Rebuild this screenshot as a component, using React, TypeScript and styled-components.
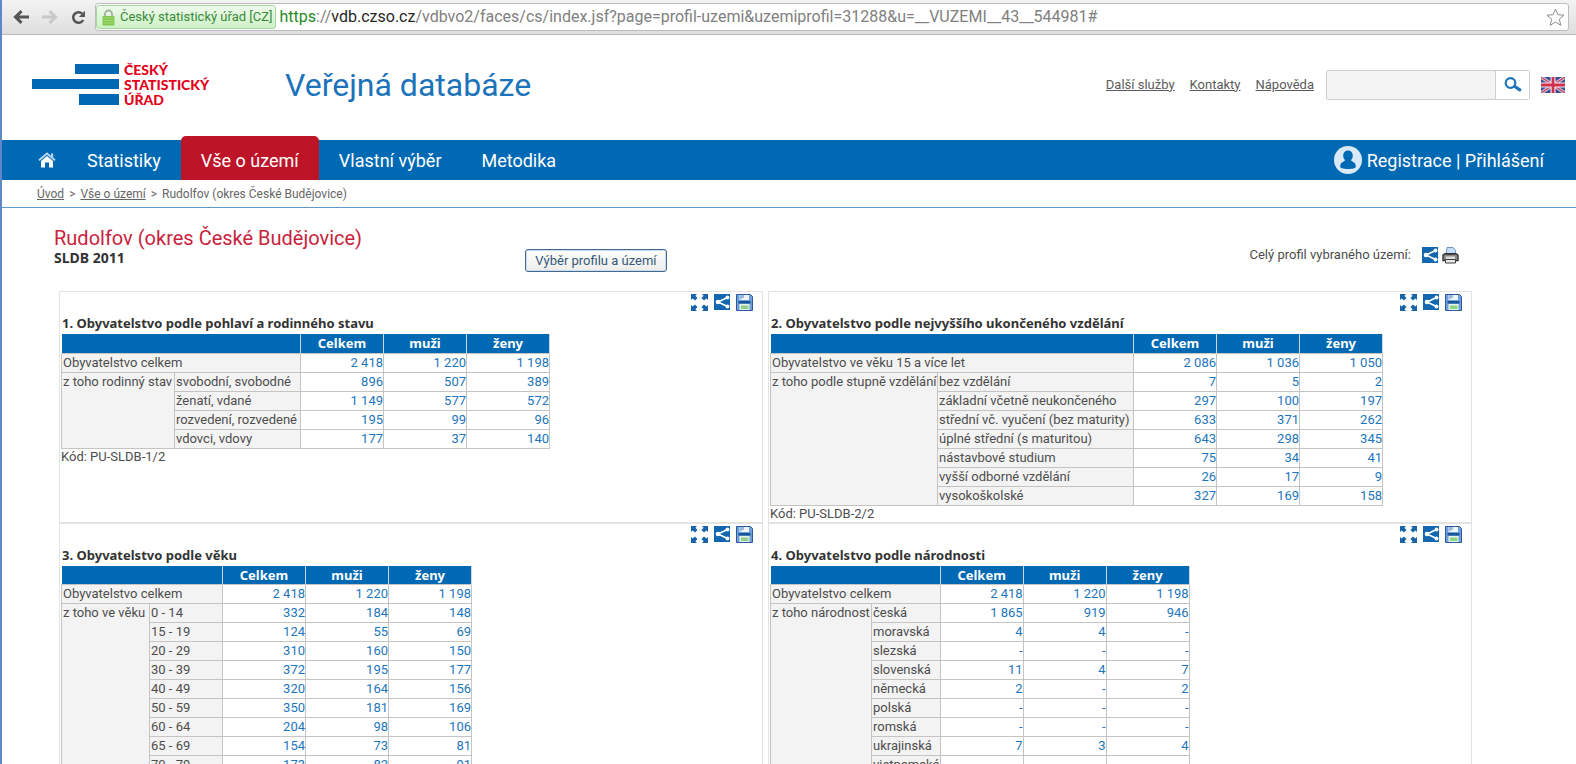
import React from 'react';
import styled, { createGlobalStyle, css } from 'styled-components';

const blue = '#0069b4';
const red = '#be1428';
const bodyFont = 'Roboto, "Noto Sans", sans-serif';
const boldFont = '"Noto Sans", Roboto, sans-serif';

const GlobalStyle = createGlobalStyle`
  *, *::before, *::after { box-sizing: border-box; }
  body { margin: 0; background: #fff; color: #4d4d4d; font: 13px/18px ${bodyFont}; }
  button, input { font: inherit; color: inherit; }
  h1, h2, p { margin: 0; }
  svg { display: block; }
`;

const Window = styled.div`
  display: flex;
  flex-direction: column;
  height: 100vh;
  overflow: hidden;
  border-left: 2px solid #5f86c6;
`;

/* Browser toolbar */
const BrowserBar = styled.div`
  display: flex;
  align-items: center;
  flex: none;
  height: 35px;
  padding: 0 7px 0 4px;
  background: linear-gradient(#f3f3f3, #dedede);
  border-bottom: 1px solid #b9b9b9;
`;

const BarButton = styled.button`
  display: grid;
  place-items: center;
  flex: none;
  width: 29px;
  height: 28px;
  padding: 0;
  border: 0;
  background: none;
`;

const AddressBox = styled.div`
  display: flex;
  align-items: center;
  flex: 1;
  min-width: 0;
  height: 28px;
  margin-left: 2px;
  padding-right: 3px;
  border: 1px solid #bdbdbd;
  border-radius: 3px;
  background: #fff;
`;

const Certificate = styled.button`
  display: flex;
  align-items: center;
  flex: none;
  gap: 5px;
  height: 24px;
  padding: 0 3px 0 5px;
  border: 1px solid #a5d8a0;
  border-radius: 3px;
  background: linear-gradient(#eefaeb, #cdf1c6);
  color: #3b8a3b;
  white-space: nowrap;
`;

const Address = styled.div`
  flex: 1;
  min-width: 0;
  padding-left: 3px;
  overflow: hidden;
  color: #808080;
  font-size: 16px;
  line-height: 24px;
  white-space: nowrap;
`;

const Scheme = styled.span`color: #1f8a1f;`;
const Domain = styled.span`color: #262626;`;

const StarButton = styled.button`
  padding: 0;
  border: 0;
  background: none;
`;

/* Site header */
const Header = styled.header`
  display: flex;
  align-items: center;
  flex: none;
  height: 105px;
  padding: 0 11px 6px 30px;
`;

const LogoLink = styled.a`
  display: flex;
  align-items: center;
  gap: 5px;
  width: 253px;
  color: #e2001a;
  font: 900 14px/15px Lato, sans-serif;
  text-decoration: none;
`;

const LogoText = styled.span`
  display: block;
  width: min-content;
`;

const SiteName = styled.span`
  flex: 1;
  color: #1c73b9;
  font-size: 32px;
  line-height: 40px;
`;

const ServiceLinks = styled.nav`
  display: flex;
  gap: 15px;
  margin-right: 12px;
  a { color: #5a5a5a; }
`;

const SearchForm = styled.form`
  display: flex;
  width: 204px;
  height: 30px;
  margin-right: 11px;
  border: 1px solid #cfcfcf;
  border-radius: 2px;
`;

const SearchInput = styled.input`
  flex: 1;
  min-width: 0;
  padding: 0 6px;
  border: 0;
  border-right: 1px solid #cfcfcf;
  background: #f3f3f3;
`;

const SearchButton = styled.button`
  display: grid;
  place-items: center;
  width: 33px;
  padding: 0;
  border: 0;
  background: #fff;
`;

/* Main navigation */
const NavBar = styled.nav`
  display: flex;
  align-items: flex-end;
  flex: none;
  height: 40px;
  background: ${blue};
  padding: 0 32px 0 36px;
`;

const HomeLink = styled.a`
  display: grid;
  align-items: center;
  height: 40px;
  padding-right: 11px;
`;

const NavLink = styled.a<{ $active?: boolean }>`
  flex: none;
  height: 40px;
  padding: 0 20px;
  color: #fff;
  font-size: 18px;
  line-height: 41px;
  text-decoration: none;
  ${({ $active }) =>
    $active &&
    css`
      height: 44px;
      padding-top: 4px;
      border-radius: 5px 5px 0 0;
      background: ${red};
    `}
`;

const Account = styled.div`
  display: flex;
  align-items: center;
  gap: 5px;
  height: 40px;
  margin-left: auto;
  color: #fff;
  font-size: 18px;
  line-height: 41px;
  white-space: pre;
  a { color: inherit; text-decoration: none; }
`;

const Breadcrumbs = styled.nav`
  display: flex;
  flex: none;
  gap: 5px;
  height: 28px;
  padding-left: 35px;
  border-bottom: 1px solid #5b9bd0;
  color: #666;
  font-size: 12px;
  line-height: 28px;
  a { color: inherit; }
`;

/* Profile heading */
const ProfileHead = styled.section`
  display: grid;
  grid-template-columns: 1fr 1fr 1fr;
  flex: none;
  height: 83px;
  padding: 18px 117px 0 52px;
`;

const ProfileTitle = styled.h1`
  color: #c8233d;
  font-size: 20px;
  font-weight: 400;
  line-height: 24px;
`;

const Census = styled.p`
  color: #333;
  font: 700 14px/16px ${boldFont};
`;

const PickButton = styled.button`
  justify-self: start;
  height: 23px;
  margin: 23px 0 0 3px;
  padding: 0 9px;
  border: 1px solid #44698f;
  border-radius: 3px;
  background: linear-gradient(#fff, #ececea);
  box-shadow: inset 0 0 0 1px #c9dcee;
  color: #345878;
  line-height: 20px;
`;

const ProfileTools = styled.div`
  display: flex;
  align-items: center;
  justify-content: flex-end;
  gap: 4px;
  height: 20px;
  margin-top: 19px;
`;

const ToolsLabel = styled.span`
  margin-right: 7px;
`;

const ToolButton = styled.button`
  padding: 0;
  border: 0;
  background: none;
`;

/* Data panels */
const PanelGrid = styled.main`
  display: grid;
  grid-template-columns: 1fr 1fr;
  column-gap: 5px;
  flex: none;
  padding: 0 104px 0 57px;
`;

const Panel = styled.section`
  padding-left: 1px;
  border: 1px solid #e3e3e3;
`;

const PanelTools = styled.div`
  display: flex;
  align-items: flex-start;
  justify-content: flex-end;
  gap: 6px;
  height: 21px;
  padding: 2px 9px 0 0;
`;

const PanelTitle = styled.h2`
  padding-left: 1px;
  color: #333;
  font: 700 13px/21px ${boldFont};
`;

const DataTable = styled.table`
  border-collapse: collapse;
  table-layout: fixed;
  white-space: nowrap;
`;

const Column = styled.col<{ $width: number }>`
  width: ${({ $width }) => $width}px;
`;

const HeadCell = styled.th`
  height: 19px;
  padding: 0;
  border: 1px solid #c8d8e6;
  border-width: 0 1px;
  background: ${blue};
  color: #fff;
  font: 700 13px/18px ${boldFont};
  &:first-child { border-left: 0; }
`;

const LabelCell = styled.th`
  height: 19px;
  padding: 0 0 0 1px;
  border: 1px solid #c6c4c2;
  background: #f3f3f3;
  font-weight: 400;
  line-height: 18px;
  text-align: left;
  vertical-align: top;
`;

const ValueCell = styled.td`
  height: 19px;
  padding: 0;
  border: 1px solid #c6c4c2;
  color: #1d76bd;
  line-height: 18px;
  text-align: right;
`;

const Code = styled.p`
  height: 16px;
  line-height: 16px;
`;

const BackIcon = () => (
  <svg width="16" height="14" viewBox="0 0 16 14" fill="none" stroke="#555" strokeWidth="3">
    <path d="M16 7H3M8.500 1.200 2.500 7l6 5.800" />
  </svg>
);
const ForwardIcon = () => (
  <svg width="16" height="14" viewBox="0 0 16 14" fill="none" stroke="#c9c9c9" strokeWidth="3">
    <path d="M0 7h13M7.500 1.200l6 5.800-6 5.800" />
  </svg>
);
const ReloadIcon = () => (
  <svg width="15" height="15" viewBox="0 0 15 15">
    <path d="M12.200 10A5.300 5.300 0 1 1 11.200 3.600" fill="none" stroke="#555" strokeWidth="2.500" />
    <path d="M14 .8V7H7.800z" fill="#555" />
  </svg>
);
const LockIcon = () => (
  <svg width="13" height="17" viewBox="0 0 13 17">
    <path d="M3 8V5a3.500 3.500 0 0 1 7 0v3" fill="none" stroke="#a3ada0" strokeWidth="1.800" />
    <rect x=".5" y="7" width="12" height="9.500" rx="1" fill="#82c752" />
    <path d="M1.500 9h10M1.500 11.500h10M1.500 14h10" stroke="#a3dc74" />
  </svg>
);
const StarIcon = () => (
  <svg width="19" height="19" viewBox="0 0 19 19">
    <path d="m9.500 1 2.400 5.700 6.100.5-4.700 4 1.500 6.100-5.300-3.300-5.300 3.300 1.500-6.100-4.700-4 6.100-.5z" fill="#fff" stroke="#8d8d8d" strokeLinejoin="round" />
  </svg>
);
const LogoBars = () => (
  <svg width="87" height="41" viewBox="0 0 87 41" fill="#0067b3">
    <path d="M43 0h44v10H43zM0 15h87v10H0zM47 30h40v11H47z" />
  </svg>
);
const SearchIcon = () => (
  <svg width="18" height="16" viewBox="0 0 18 16" fill="none" stroke="#1f74b9">
    <circle cx="6.500" cy="6" r="4.800" strokeWidth="2.200" />
    <path d="m10.800 9.500 5 3.300" strokeWidth="3.200" strokeLinecap="round" />
  </svg>
);
const FlagIcon = () => (
  <svg width="24" height="16" viewBox="0 0 24 16">
    <path d="M0 0h24v16H0z" fill="#3d4f93" />
    <path d="m0 0 24 16M24 0 0 16" stroke="#c9c3da" strokeWidth="3.400" />
    <path d="m0 0 24 16M24 0 0 16" stroke="#d4405a" strokeWidth="1.200" />
    <path d="M12 0v16M0 8h24" stroke="#f0eef5" strokeWidth="5" />
    <path d="M12 0v16M0 8h24" stroke="#d22f4b" strokeWidth="2.800" />
  </svg>
);
const HomeIcon = () => (
  <svg width="18" height="16" viewBox="0 0 18 16">
    <path d="M9 4 15 9V15.500H11V10.500H7V15.500H3V9z" fill="#fff" />
    <path d="M1 8.300 9 1.500l8 6.800" fill="none" stroke="#b9d8ee" strokeWidth="1.800" />
    <path d="M13 1.500h2.200v4L13 3.700z" fill="#b9d8ee" />
  </svg>
);
const UserIcon = () => (
  <svg width="28" height="28" viewBox="0 0 28 28">
    <circle cx="14" cy="14" r="14" fill="#d9e9f5" />
    <path d="M14 4.500c3 0 4.800 2 4.800 5 0 2-.8 3.600-1.800 4.600.3 1 1 1.300 2.300 1.800 1.800.7 2.500 2.400 2.500 4.800 0 1.300-3.400 2.300-7.800 2.300s-7.800-1-7.800-2.300c0-2.400.7-4.100 2.500-4.800 1.300-.5 2-.8 2.300-1.800-1-1-1.800-2.600-1.800-4.600 0-3 1.800-5 4.800-5z" fill={blue} />
  </svg>
);
const ExpandIcon = () => (
  <svg width="17" height="17" viewBox="0 0 17 17">
    <path d="M0 0h6L4.400 1.700 6.500 4 4 6.500 1.700 4.400 0 6zM17 0v6l-1.700-1.600L13 6.500 10.500 4l2.100-2.300L11 0zM0 17v-6l1.700 1.600L4 10.500 6.500 13l-2.100 2.300L6 17zM17 17h-6l1.600-1.700-2.100-2.300 2.500-2.500 2.300 2.100L17 11z" fill="#1765a8" />
  </svg>
);
const ShareIcon = () => (
  <svg width="16" height="16" viewBox="0 0 16 16">
    <path d="M0 0h16v16H0z" fill="#1268b0" />
    <path d="M13.500 3.500 4 8l9.500 4.500" fill="none" stroke="#fff" strokeWidth="1.600" />
    <circle cx="4" cy="8" r="2.300" fill="#fff" />
    <circle cx="13.500" cy="3.500" r="1.900" fill="#fff" />
    <circle cx="13.500" cy="12.500" r="1.900" fill="#fff" />
  </svg>
);
const SaveIcon = () => (
  <svg width="17" height="17" viewBox="0 0 17 17">
    <path d="M.5.5h14l2 2v14H.5z" fill="#6f9fd8" stroke="#2c5a9c" />
    <path d="M3.500 1h9.500v5H3.500z" fill="#edf4fc" />
    <path d="M5 1v4M7 1v3" stroke="#4d7fbf" />
    <path d="M2.500 7h12v2.500h-12z" fill="#17549a" />
    <path d="M3.500 10h10v6h-10z" fill="#e6f2ea" />
    <path d="M5 11.500h7.500V15H5z" fill="#8fd389" />
  </svg>
);
const PrintIcon = () => (
  <svg width="17" height="17" viewBox="0 0 17 17">
    <path d="M4 8 5 .5h6l2.500 3V8z" fill="#c4defa" stroke="#6d93c4" />
    <path d="M1 13.500V8.200l2-1.400h11l2 1.400v5.300z" fill="#8b8b8b" stroke="#333" strokeWidth="1.400" />
    <path d="M4 9.500h9v2.500H4z" fill="#dcdcdc" />
    <path d="M3.500 12.500h10v3.500h-10z" fill="#e9e9e9" stroke="#3c3c3c" />
    <path d="M4 7.500h9" stroke="#444" />
  </svg>
);

type Row = [label: string, total: string, men: string, women: string];
type PanelData = {
  title: string;
  total: Row;
  group: string;
  widths: [number, number];
  rows: Row[];
  code: string;
};

const panels: PanelData[] = [
  {
    title: '1. Obyvatelstvo podle pohlaví a rodinného stavu',
    total: ['Obyvatelstvo celkem', '2 418', '1 220', '1 198'],
    group: 'z toho rodinný stav',
    widths: [113, 126],
    rows: [
      ['svobodní, svobodné', '896', '507', '389'],
      ['ženatí, vdané', '1 149', '577', '572'],
      ['rozvedení, rozvedené', '195', '99', '96'],
      ['vdovci, vdovy', '177', '37', '140'],
    ],
    code: 'PU-SLDB-1/2',
  },
  {
    title: '2. Obyvatelstvo podle nejvyššího ukončeného vzdělání',
    total: ['Obyvatelstvo ve věku 15 a více let', '2 086', '1 036', '1 050'],
    group: 'z toho podle stupně vzdělání',
    widths: [167, 196],
    rows: [
      ['bez vzdělání', '7', '5', '2'],
      ['základní včetně neukončeného', '297', '100', '197'],
      ['střední vč. vyučení (bez maturity)', '633', '371', '262'],
      ['úplné střední (s maturitou)', '643', '298', '345'],
      ['nástavbové studium', '75', '34', '41'],
      ['vyšší odborné vzdělání', '26', '17', '9'],
      ['vysokoškolské', '327', '169', '158'],
    ],
    code: 'PU-SLDB-2/2',
  },
  {
    title: '3. Obyvatelstvo podle věku',
    total: ['Obyvatelstvo celkem', '2 418', '1 220', '1 198'],
    group: 'z toho ve věku',
    widths: [88, 73],
    rows: [
      ['0 - 14', '332', '184', '148'],
      ['15 - 19', '124', '55', '69'],
      ['20 - 29', '310', '160', '150'],
      ['30 - 39', '372', '195', '177'],
      ['40 - 49', '320', '164', '156'],
      ['50 - 59', '350', '181', '169'],
      ['60 - 64', '204', '98', '106'],
      ['65 - 69', '154', '73', '81'],
      ['70 - 79', '173', '82', '91'],
    ],
    code: 'PU-SLDB-3/2',
  },
  {
    title: '4. Obyvatelstvo podle národnosti',
    total: ['Obyvatelstvo celkem', '2 418', '1 220', '1 198'],
    group: 'z toho národnost',
    widths: [101, 68],
    rows: [
      ['česká', '1 865', '919', '946'],
      ['moravská', '4', '4', '-'],
      ['slezská', '-', '-', '-'],
      ['slovenská', '11', '4', '7'],
      ['německá', '2', '-', '2'],
      ['polská', '-', '-', '-'],
      ['romská', '-', '-', '-'],
      ['ukrajinská', '7', '3', '4'],
      ['vietnamská', '-', '-', '-'],
    ],
    code: 'PU-SLDB-4/2',
  },
];

const Values = ({ row }: { row: Row }) => (
  <>
    {row.slice(1).map((value, i) => (
      <ValueCell key={i}>{value}</ValueCell>
    ))}
  </>
);

function StatPanel({ data }: { data: PanelData }) {
  const { title, total, group, widths, rows, code } = data;
  return (
    <Panel>
      <PanelTools>
        <ToolButton aria-label="Zvětšit"><ExpandIcon /></ToolButton>
        <ToolButton aria-label="Sdílet"><ShareIcon /></ToolButton>
        <ToolButton aria-label="Uložit"><SaveIcon /></ToolButton>
      </PanelTools>
      <PanelTitle>{title}</PanelTitle>
      <DataTable aria-label={title}>
        <colgroup>
          {[...widths, 83, 83, 83].map((w, i) => (
            <Column key={i} $width={w} />
          ))}
        </colgroup>
        <thead>
          <tr>
            <HeadCell colSpan={2} />
            <HeadCell scope="col">Celkem</HeadCell>
            <HeadCell scope="col">muži</HeadCell>
            <HeadCell scope="col">ženy</HeadCell>
          </tr>
        </thead>
        <tbody>
          <tr>
            <LabelCell colSpan={2} scope="row">{total[0]}</LabelCell>
            <Values row={total} />
          </tr>
          {rows.map((row, i) => (
            <tr key={row[0]}>
              {i === 0 && <LabelCell rowSpan={rows.length} scope="rowgroup">{group}</LabelCell>}
              <LabelCell scope="row">{row[0]}</LabelCell>
              <Values row={row} />
            </tr>
          ))}
        </tbody>
      </DataTable>
      <Code>Kód: {code}</Code>
    </Panel>
  );
}

export default function App() {
  return (
    <Window>
      <GlobalStyle />
      <BrowserBar>
        <BarButton aria-label="Zpět"><BackIcon /></BarButton>
        <BarButton aria-label="Vpřed"><ForwardIcon /></BarButton>
        <BarButton aria-label="Načíst znovu"><ReloadIcon /></BarButton>
        <AddressBox>
          <Certificate><LockIcon />Český statistický úřad [CZ]</Certificate>
          <Address>
            <Scheme>https</Scheme>://<Domain>vdb.czso.cz</Domain>
            /vdbvo2/faces/cs/index.jsf?page=profil-uzemi&amp;uzemiprofil=31288&amp;u=__VUZEMI__43__544981#
          </Address>
          <StarButton aria-label="Přidat záložku"><StarIcon /></StarButton>
        </AddressBox>
      </BrowserBar>

      <Header>
        <LogoLink href="#">
          <LogoBars />
          <LogoText>ČESKÝ STATISTICKÝ ÚŘAD</LogoText>
        </LogoLink>
        <SiteName>Veřejná databáze</SiteName>
        <ServiceLinks>
          <a href="#">Další služby</a>
          <a href="#">Kontakty</a>
          <a href="#">Nápověda</a>
        </ServiceLinks>
        <SearchForm>
          <SearchInput type="text" aria-label="Hledat" />
          <SearchButton aria-label="Vyhledat"><SearchIcon /></SearchButton>
        </SearchForm>
        <a href="#" aria-label="English"><FlagIcon /></a>
      </Header>

      <NavBar>
        <HomeLink href="#" aria-label="Úvod"><HomeIcon /></HomeLink>
        <NavLink href="#">Statistiky</NavLink>
        <NavLink href="#" $active>Vše o území</NavLink>
        <NavLink href="#">Vlastní výběr</NavLink>
        <NavLink href="#">Metodika</NavLink>
        <Account>
          <UserIcon />
          <span><a href="#">Registrace</a> | <a href="#">Přihlášení</a></span>
        </Account>
      </NavBar>

      <Breadcrumbs>
        <a href="#">Úvod</a>
        <span>&gt;</span>
        <a href="#">Vše o území</a>
        <span>&gt;</span>
        <span>Rudolfov (okres České Budějovice)</span>
      </Breadcrumbs>

      <ProfileHead>
        <div>
          <ProfileTitle>Rudolfov (okres České Budějovice)</ProfileTitle>
          <Census>SLDB 2011</Census>
        </div>
        <PickButton>Výběr profilu a území</PickButton>
        <ProfileTools>
          <ToolsLabel>Celý profil vybraného území:</ToolsLabel>
          <ToolButton aria-label="Sdílet profil"><ShareIcon /></ToolButton>
          <ToolButton aria-label="Tisk"><PrintIcon /></ToolButton>
        </ProfileTools>
      </ProfileHead>

      <PanelGrid>
        {panels.map((data) => (
          <StatPanel key={data.title} data={data} />
        ))}
      </PanelGrid>
    </Window>
  );
}
